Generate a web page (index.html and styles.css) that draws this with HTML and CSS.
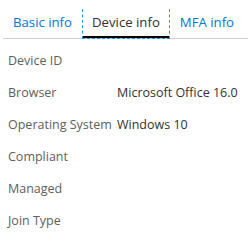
FILE: index.html
```html
<!DOCTYPE html>
<html lang="en">
<head>
    <meta charset="UTF-8">
    <title>Device info</title>
    <link rel="stylesheet" href="styles.css">
</head>
<body>
    <div class="panel">
        <div class="tabs">
            <div class="tab">Basic info</div>
            <div class="tab active">Device info</div>
            <div class="tab">MFA info</div>
        </div>

        <div class="details">
            <div class="label">Device ID</div>
            <div class="value"></div>
            <div class="label">Browser</div>
            <div class="value">Microsoft Office 16.0</div>
            <div class="label">Operating System</div>
            <div class="value">Windows 10</div>
            <div class="label">Compliant</div>
            <div class="value"></div>
            <div class="label">Managed</div>
            <div class="value"></div>
            <div class="label">Join Type</div>
            <div class="value"></div>
        </div>
    </div>
</body>
</html>
```

FILE: styles.css
```css
body {
    margin: 0;
    font-family: "Open Sans", "Noto Sans", sans-serif;
    background-color: #fff;
    color: #323130;
}

.panel {
    padding: 9px 0 0 3px;
}

.tabs {
    display: flex;
    height: 29px;
    border-bottom: 1px solid #d2d0ce;
}

.tab {
    flex-shrink: 0;
    height: 29px;
    line-height: 27px;
    padding: 0 10px;
    font-size: 13.2px;
    color: #0078d4;
    white-space: nowrap;
    box-sizing: border-box;
}

.tab.active {
    position: relative;
    color: #323130;
    border-bottom: 2px solid #000;
}

/* focus ring drawn over the tab */
.tab.active::after {
    content: "";
    position: absolute;
    top: 0;
    left: 0;
    right: 0;
    bottom: -3px;
    border: 1px dashed #1a9be0;
    border-top: none;
}

.details {
    display: grid;
    grid-template-columns: 109px 1fr;
    grid-auto-rows: 32px;
    padding: 6px 0 0 5px;
    font-size: 12.5px;
    line-height: 32px;
}

.label {
    color: #605e5c;
    white-space: nowrap;
}

.value {
    color: #323130;
    white-space: nowrap;
}
```
